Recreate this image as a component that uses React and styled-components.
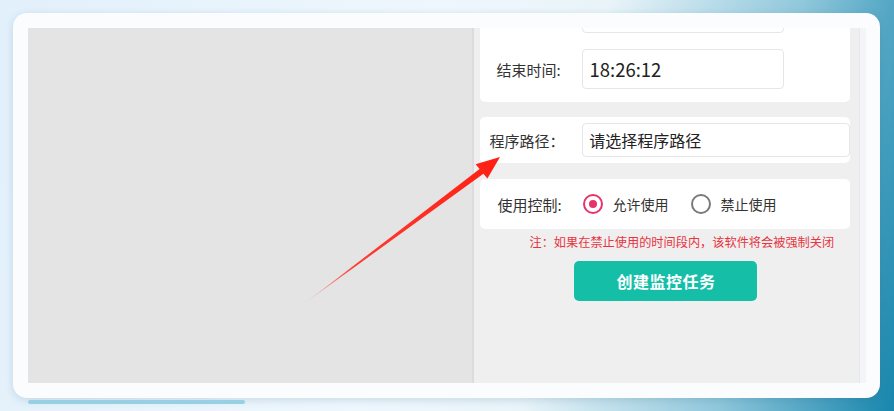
import styled, { createGlobalStyle } from "styled-components";

const GlobalStyle = createGlobalStyle`
  html, body {
    margin: 0;
    padding: 0;
    overflow: hidden;
  }
  body {
    font-family: "Noto Sans CJK SC", "Noto Sans", sans-serif;
  }
`;

const Page = styled.div`
  position: relative;
  width: 894px;
  height: 411px;
  box-sizing: border-box;
  padding: 13px 14px 0 13px;
  background: linear-gradient(
    102deg,
    #e2f0fb 0%,
    #eef7fd 45%,
    #e9f4f9 62%,
    #8fc7db 82%,
    #1786ad 100%
  );
  overflow: hidden;
`;

const Frame = styled.div`
  display: flex;
  height: 385px;
  box-sizing: border-box;
  padding: 15px 14px 15px 15px;
  background: #fbfcfd;
  border-radius: 14px;
  box-shadow: 0 2px 8px rgba(40, 90, 120, 0.18);
`;

const Preview = styled.div`
  width: 445px;
  background: #e4e4e4;
  border-right: 2px solid #dcdcdc;
`;

const Side = styled.div`
  width: 385px;
  display: flex;
  flex-direction: column;
  box-sizing: border-box;
  padding: 0 9px 0 6px;
  background: #efefef;
  overflow: hidden;
`;

const ScrollTrack = styled.div`
  width: 6px;
  background: #f3f5f7;
  border-left: 1px solid #e6e8ea;
`;

const Card = styled.div`
  display: flex;
  flex-direction: column;
  gap: 16px;
  background: #fff;
  border-radius: 5px;
  padding: ${({ $pad }) => $pad || "6px 0"};
  margin-top: ${({ $top }) => $top || "0"};
`;

const Row = styled.div`
  display: flex;
  align-items: center;
  height: ${({ $h }) => $h || "40px"};
`;

const Label = styled.span`
  width: ${({ $w }) => $w || "86px"};
  padding-left: ${({ $indent }) => $indent || "16px"};
  font-size: 15px;
  color: #333;
  white-space: nowrap;
`;

const Field = styled.div`
  display: flex;
  align-items: center;
  box-sizing: border-box;
  width: ${({ $w }) => $w || "202px"};
  height: 100%;
  padding-left: 6px;
  background: #fff;
  border: 1px solid #e6e6e6;
  border-radius: 4px;
  font-size: ${({ $size }) => $size || "18.5px"};
  color: #222;
`;

const RadioGroup = styled.div`
  display: flex;
  align-items: center;
  gap: 23px;
`;

const RadioItem = styled.label`
  display: flex;
  align-items: center;
  gap: 9px;
  font-size: 14px;
  color: #333;
`;

const RadioDot = styled.span`
  width: 20px;
  height: 20px;
  box-sizing: border-box;
  border-radius: 50%;
  border: 2px solid ${({ $on }) => ($on ? "#e8336a" : "#7a7a7a")};
  display: flex;
  align-items: center;
  justify-content: center;

  &::after {
    content: "";
    width: 8px;
    height: 8px;
    border-radius: 50%;
    background: ${({ $on }) => ($on ? "#e8336a" : "transparent")};
  }
`;

const Note = styled.div`
  margin-top: 4px;
  padding-left: 49px;
  font-size: 12.2px;
  line-height: 18px;
  color: #e8343f;
  white-space: nowrap;
`;

const CreateButton = styled.button`
  align-self: flex-start;
  margin: 10px 0 0 94px;
  width: 183px;
  height: 40px;
  border: none;
  border-radius: 5px;
  background: #15bfa7;
  color: #fff;
  font-family: inherit;
  font-size: 16px;
  font-weight: 700;
  letter-spacing: 0.5px;
`;

const Progress = styled.div`
  margin: 2px 0 0 15px;
  width: 217px;
  height: 4px;
  border-radius: 2px;
  background: #97cfe3;
`;

const Annotation = styled.svg`
  position: absolute;
  left: 0;
  top: 0;
  pointer-events: none;
`;

const Arrow = () => (
  <Annotation width="894" height="411" viewBox="0 0 894 411">
    <defs>
      <linearGradient id="arrowFade" x1="305" y1="303" x2="499" y2="158" gradientUnits="userSpaceOnUse">
        <stop offset="0" stopColor="#ff3b2b" stopOpacity="0.15" />
        <stop offset="0.25" stopColor="#ff2a1e" stopOpacity="0.9" />
        <stop offset="1" stopColor="#ff1e12" />
      </linearGradient>
    </defs>
    <polygon
      points="305,303 483.4,173.8 487.4,178.6 500,157 475.6,164.2 479.6,169.0"
      fill="url(#arrowFade)"
    />
  </Annotation>
);

export default function App() {
  return (
    <>
      <GlobalStyle />
      <Page>
        <Frame>
          <Preview />
          <Side>
            <Card $top="-45px" $pad="10px 0 13px">
              <Row>
                <Label />
                <Field />
              </Row>
              <Row>
                <Label>结束时间:</Label>
                <Field>18:26:12</Field>
              </Row>
            </Card>
            <Card $top="15px">
              <Row $h="34px">
                <Label $indent="9px" $w="93px">程序路径：</Label>
                <Field $w="268px" $size="16px">请选择程序路径</Field>
              </Row>
            </Card>
            <Card $top="16px" $pad="5px 0">
              <Row>
                <Label $indent="17px">使用控制:</Label>
                <RadioGroup>
                  <RadioItem>
                    <RadioDot $on />
                    允许使用
                  </RadioItem>
                  <RadioItem>
                    <RadioDot />
                    禁止使用
                  </RadioItem>
                </RadioGroup>
              </Row>
            </Card>
            <Note>注：如果在禁止使用的时间段内，该软件将会被强制关闭</Note>
            <CreateButton>创建监控任务</CreateButton>
          </Side>
          <ScrollTrack />
        </Frame>
        <Progress />
        <Arrow />
      </Page>
    </>
  );
}
